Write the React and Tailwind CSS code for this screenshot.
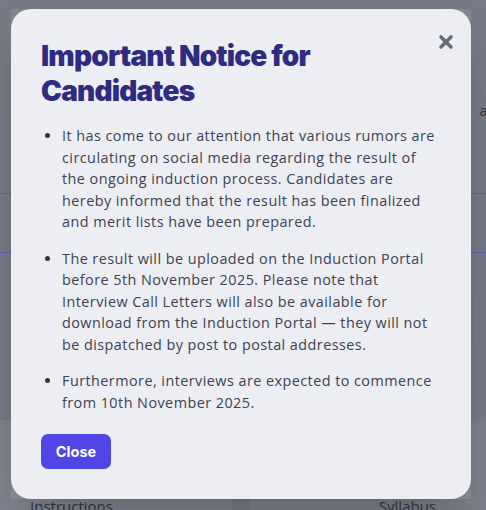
import { useState } from 'react'

const NOTICES = [
  'It has come to our attention that various rumors are circulating on social media regarding the result of the ongoing induction process. Candidates are hereby informed that the result has been finalized and merit lists have been prepared.',
  'The result will be uploaded on the Induction Portal before 5th November 2025. Please note that Interview Call Letters will also be available for download from the Induction Portal \u2014 they will not be dispatched by post to postal addresses.',
  'Furthermore, interviews are expected to commence from 10th November 2025.',
]

function CloseIcon() {
  return (
    <svg width="16" height="16" viewBox="0 0 16 16" fill="none">
      <path d="M3 3L13 13M13 3L3 13" stroke="currentColor" strokeWidth="3.6" strokeLinecap="round" />
    </svg>
  )
}

export default function App() {
  const [open, setOpen] = useState(true)

  return (
    <div className="relative h-[510px] w-full overflow-hidden bg-[#777b87] font-['Open_Sans',sans-serif]">
      {/* page behind the overlay (dimmed) */}
      <div className="flex h-full flex-col">
        <div className="h-[98px]" />
        <div className="flex h-[24px] items-center justify-between overflow-hidden text-[15px] text-[#33363f]">
          <span className="-ml-[38px]">Exam</span>
          <span className="-mr-[20px]">and</span>
        </div>
        <div className="h-[71px]" />
        <div className="h-[60px] border-y border-[#5c60b4]" />
        <div className="h-[167px] flex">
          <div className="w-[12px]" />
          <div className="flex-1" />
          <div className="mt-[40px] h-[50px] w-[14px] border-l border-[#6f737e]" />
        </div>
        <div className="flex flex-1 gap-[18px]">
          <div className="flex w-[232px] items-end bg-[#80848f] pl-[30px] text-[15px] leading-[18px] text-[#33363f]">
            <span className="-mb-[5px]">Instructions</span>
          </div>
          <div className="flex flex-1 flex-col items-end bg-[#7d818c] pr-[50px] text-[15px] leading-[18px] text-[#33363f]">
            <div className="mt-[42px] mr-[-14px] h-[26px] w-[26px] rounded-full bg-[#868a95]" />
            <span className="mt-auto -mb-[5px]">Syllabus</span>
          </div>
        </div>
      </div>

      {open && (
        <div className="absolute inset-0 flex items-start pl-[11px] pt-[9px]">
          <div className="relative w-[460px]">
            <div className="absolute inset-0 bg-white/10" />
            <div className="relative rounded-[20px] bg-[#eceef4] px-[30px] pb-[30px] pt-[30px] shadow-2xl">
              <button
                onClick={() => setOpen(false)}
                className="absolute right-[17px] top-[25px] text-[#676c79]"
              >
                <CloseIcon />
              </button>
              <h2 className="pr-[40px] text-[28px] font-black leading-[35px] tracking-[-0.8px] text-[#2f2b80] font-['Inter',sans-serif]">
                Important Notice for Candidates
              </h2>
              <ul className="mt-[16px] list-disc pl-[21px] text-[14.4px] leading-[21.5px] tracking-[0.45px] text-[#3e4252] marker:text-[#2f3545]">
                {NOTICES.map((n) => (
                  <li key={n} className="mb-[15px]">{n}</li>
                ))}
              </ul>
              <button
                onClick={() => setOpen(false)}
                className="mt-[6px] h-[35px] w-[70px] rounded-[7px] bg-[#4f46e5] text-[14.5px] font-bold text-white font-['Inter',sans-serif]"
              >
                Close
              </button>
            </div>
          </div>
        </div>
      )}
    </div>
  )
}
